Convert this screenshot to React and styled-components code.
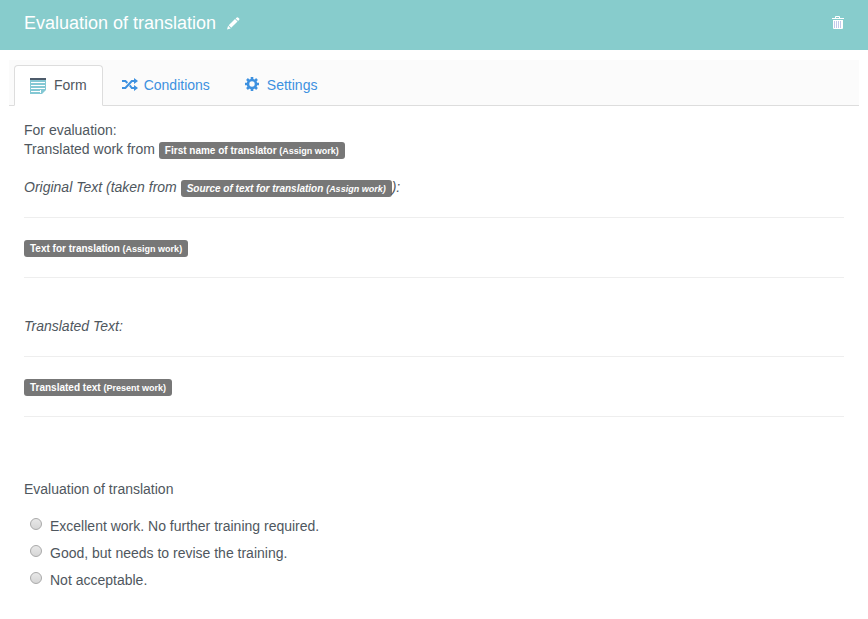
import { useState } from 'react'
import styled, { createGlobalStyle, css } from 'styled-components'

const GlobalStyle = createGlobalStyle`
    *, *::before, *::after {
        box-sizing: border-box;
    }
    body {
        margin: 0;
        background: #fff;
        color: #4f575e;
        font-family: "Liberation Sans", Arial, sans-serif;
        font-size: 14px;
        line-height: 19px;
    }
`

const Header = styled.header`
    display: flex;
    align-items: center;
    justify-content: space-between;
    height: 50px;
    padding: 0 24px 4px;
    background: #87cccc;
    color: #fff;
`
const HeaderTitle = styled.div`
    display: flex;
    align-items: center;
    gap: 11px;
`
const Title = styled.h1`
    margin: 0;
    font-size: 18px;
    line-height: 22px;
    font-weight: 500;
`
const IconButton = styled.button`
    display: flex;
    padding: 0;
    border: 0;
    background: none;
    color: inherit;
    cursor: pointer;
`
const Icon = styled.svg`
    display: block;
    flex: none;
    fill: currentColor;
`

const TabBar = styled.nav`
    display: flex;
    align-items: flex-end;
    gap: 3px;
    margin: 10px 9px 0;
    padding: 5px 5px 0;
    background: #fbfbfb;
    border-bottom: 1px solid #ddd;
`
const Tab = styled.a`
    display: flex;
    align-items: center;
    gap: ${props => props.$gap}px;
    height: 41px;
    margin-bottom: -1px;
    padding: 0 15px;
    border: 1px solid transparent;
    border-radius: 4px 4px 0 0;
    color: #3d91e0;
    text-decoration: none;
    ${props => props.$active && css`
        color: #4f575e;
        background: #fff;
        border-color: #ddd #ddd #fff;
    `}
`

const Content = styled.main`
    padding: 15px 24px;
`
const Paragraph = styled.p`
    margin: 0;
    font-style: ${props => (props.$italic ? 'italic' : 'normal')};
`
const Spacer = styled.div`
    height: 19px;
`
const Divider = styled.hr`
    margin: 20px 0;
    border: 0;
    border-top: 1px solid #eee;
`
const FieldLabel = styled.span`
    display: inline-block;
    height: 17px;
    padding: 0 6px;
    border-radius: 3px;
    background: #777;
    color: #fff;
    font-size: 10px;
    line-height: 17px;
    font-weight: bold;
    white-space: nowrap;
    vertical-align: bottom;

    small {
        font-size: 9px;
    }
`

const Question = styled.fieldset`
    margin: 63px 0 0;
    padding: 0;
    border: 0;
`
const Legend = styled.legend`
    margin-bottom: 18px;
    padding: 0;
`
const Option = styled.label`
    display: flex;
    gap: 8px;
    width: fit-content;
    margin-bottom: 8px;
    padding-left: 6px;
`
const Radio = styled.input`
    appearance: none;
    width: 12px;
    height: 12px;
    margin: 1px 0 0;
    border: 1px solid #a9a9a9;
    border-radius: 50%;
    background: linear-gradient(#e8e8e8, #d6d6d6);

    &:checked {
        background: radial-gradient(#555 3px, #ddd 4px);
    }
`

const PencilIcon = () => (
    <Icon width="13" height="14" viewBox="0 0 13 14" aria-hidden="true">
        <path d="M0 13.4L1.1 9.8L3.7 12.4Z" />
        <path d="M1.7 9.3L8 3.1L10.5 5.6L4.2 11.8Z" />
        <path d="M8.6 2.5L9.8 1.4Q10.4 0.9 11 1.4L12.2 2.6Q12.7 3.2 12.2 3.8L11.1 5Z" />
    </Icon>
)

const TrashIcon = () => (
    <Icon width="12" height="14" viewBox="0 0 12 14" aria-hidden="true">
        <path d="M3 2V1Q3 0 4 0H7Q8 0 8 1V2H12V3H0V2ZM4 2H7V1H4Z" />
        <path d="M1 4H11V12Q11 13 10 13H2Q1 13 1 12Z" />
        <path fill="#c3c9ea" d="M2 5H3V12H2ZM4 5H5V12H4ZM6 5H7V12H6ZM8 5H9V12H8Z" />
    </Icon>
)

const FormIcon = () => (
    <Icon width="16" height="17" viewBox="0 0 16 17" aria-hidden="true">
        <path fill="#4d5b6b" d="M0 1H16V3H0Z" />
        <path fill="#84c8d4" d="M0 3H16V13L12 17H0Z" />
        <path fill="#fff" d="M1 5H15V6H1ZM1 8H15V9H1ZM1 11H15V12H1ZM1 14H10V15H1ZM10 13H11V16H10Z" />
    </Icon>
)

const ShuffleIcon = () => (
    <Icon width="16" height="17" viewBox="0 0 16 17" aria-hidden="true">
        <path
            fill="none"
            stroke="currentColor"
            strokeWidth="2"
            d="M0 4H3.4L5.4 6M7.8 8.4L9.8 11H13M0 11H3.4L9.8 4H13"
        />
        <path d="M12 1L16 4L12 7ZM12 8L16 11L12 14Z" />
    </Icon>
)

const CogIcon = () => (
    <Icon width="14" height="17" viewBox="0 0 14 17" aria-hidden="true">
        <circle cx="7" cy="7" r="4" fill="none" stroke="currentColor" strokeWidth="2.6" />
        <path
            fill="none"
            stroke="currentColor"
            strokeWidth="2.6"
            d="M7 0V2.4M7 11.6V14M0 7H2.4M11.6 7H14M2 2L3.8 3.8M10.2 10.2L12 12M12 2L10.2 3.8M3.8 10.2L2 12"
        />
    </Icon>
)

const tabs = [
    { name: 'Form', icon: FormIcon, gap: 8 },
    { name: 'Conditions', icon: ShuffleIcon, gap: 6 },
    { name: 'Settings', icon: CogIcon, gap: 8 },
]

const options = [
    'Excellent work. No further training required.',
    'Good, but needs to revise the training.',
    'Not acceptable.',
]

const Field = ({ name, step }) => (
    <FieldLabel>
        {name} <small>({step})</small>
    </FieldLabel>
)

export default function App() {
    const [active, setActive] = useState('Form')

    return (
        <>
            <GlobalStyle />
            <Header>
                <HeaderTitle>
                    <Title>Evaluation of translation</Title>
                    <IconButton type="button" aria-label="Rename">
                        <PencilIcon />
                    </IconButton>
                </HeaderTitle>
                <IconButton type="button" aria-label="Delete">
                    <TrashIcon />
                </IconButton>
            </Header>
            <TabBar>
                {tabs.map(({ name, icon: TabIcon, gap }) => (
                    <Tab
                        key={name}
                        href={'#' + name.toLowerCase()}
                        $active={active === name}
                        $gap={gap}
                        onClick={() => setActive(name)}
                    >
                        <TabIcon />
                        {name}
                    </Tab>
                ))}
            </TabBar>
            <Content>
                <Paragraph>For evaluation:</Paragraph>
                <Paragraph>
                    Translated work from <Field name="First name of translator" step="Assign work" />
                </Paragraph>
                <Spacer />
                <Paragraph $italic>
                    Original Text (taken from <Field name="Source of text for translation" step="Assign work" />):
                </Paragraph>
                <Divider />
                <Paragraph>
                    <Field name="Text for translation" step="Assign work" />
                </Paragraph>
                <Divider />
                <Spacer />
                <Paragraph $italic>Translated Text:</Paragraph>
                <Divider />
                <Paragraph>
                    <Field name="Translated text" step="Present work" />
                </Paragraph>
                <Divider />
                <Question>
                    <Legend>Evaluation of translation</Legend>
                    {options.map(text => (
                        <Option key={text}>
                            <Radio type="radio" name="evaluation" />
                            {text}
                        </Option>
                    ))}
                </Question>
            </Content>
        </>
    )
}
